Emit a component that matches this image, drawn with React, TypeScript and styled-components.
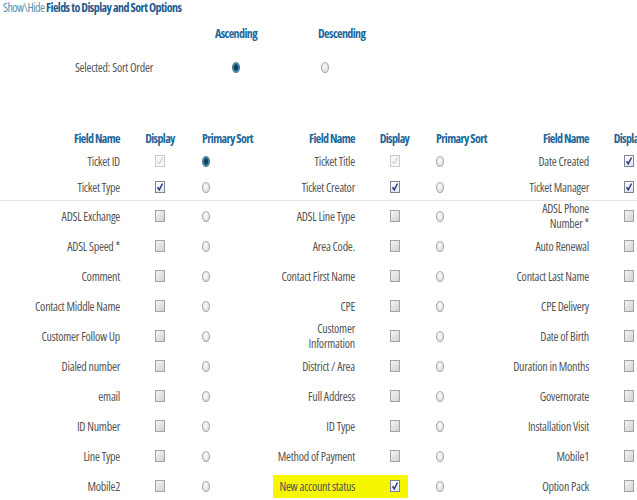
import React from "react";
import styled, { createGlobalStyle } from "styled-components";

const Global = createGlobalStyle`
  html, body { margin: 0; padding: 0; background: #fff; overflow: hidden; }
  body {
    font-family: "Open Sans", "Liberation Sans", Arial, sans-serif;
    font-stretch: 75%;
  }
`;

const Page = styled.div`
  width: 637px;
  height: 500px;
  overflow: hidden;
  color: #555;
  font-size: 12px;
`;

const Title = styled.div`
  padding: 0 3px;
  height: 15px;
  line-height: 15px;
  font-size: 12px;
  font-weight: bold;
  color: #1d5c8c;
  letter-spacing: -0.55px;
  white-space: nowrap;
`;

const TitleLight = styled.span`
  font-weight: normal;
  color: #4f95ad;
`;

const SortBlock = styled.div`
  display: grid;
  grid-template-columns: 160px 152px 120px;
  grid-template-rows: 36px 32px;
  align-items: center;
`;

const HeadText = styled.div<{ $left?: boolean }>`
  font-weight: bold;
  color: #22679a;
  text-align: ${(p) => (p.$left ? "left" : "center")};
  padding-left: ${(p) => (p.$left ? 6 : 0)}px;
  letter-spacing: -0.6px;
  white-space: nowrap;
`;

const HeadName = styled(HeadText)`
  text-align: right;
  padding-right: 4px;
`;

const LabelCell = styled.div`
  text-align: right;
  padding-right: 7px;
  letter-spacing: -0.25px;
  white-space: nowrap;
`;

const RadioCell = styled.div<{ $left?: boolean }>`
  display: flex;
  justify-content: ${(p) => (p.$left ? "flex-start" : "center")};
  padding-left: ${(p) => (p.$left ? 9 : 0)}px;
`;

const Table = styled.div`
  margin-top: 45px;
  display: grid;
  grid-template-columns: 124px 72px 74px 89px 71px 74px 89px 71px 74px;
  grid-template-rows: 20px;
  align-items: center;
  width: 664px;
`;

const Cell = styled.div<{ $h: number }>`
  height: ${(p) => p.$h}px;
  display: flex;
  align-items: center;
`;

const MARK = "#f6f600";

const NameCell = styled(Cell)<{ $marked?: boolean }>`
  justify-content: flex-end;
  text-align: right;
  padding: 0 4px;
  letter-spacing: -0.25px;
  line-height: 15px;
  white-space: pre;
  background: ${(p) =>
    p.$marked
      ? `linear-gradient(#fff 0 4px, transparent 4px calc(100% - 3px), #fff calc(100% - 3px)),
         linear-gradient(to right, #fff 0 3px, ${MARK} 3px)`
      : "transparent"};
`;

const DisplayCell = styled(Cell)<{ $marked?: boolean }>`
  justify-content: center;
  background: ${(p) =>
    p.$marked
      ? `linear-gradient(#fff 0 4px, transparent 4px calc(100% - 3px), #fff calc(100% - 3px)),
         linear-gradient(to right, ${MARK} 0 49px, #fff 49px)`
      : "transparent"};
`;

const SortCell = styled(Cell)`
  justify-content: flex-start;
  padding-left: 6px;
`;

const Separator = styled.div`
  grid-column: 1 / -1;
  height: 1px;
  background: #e4e4e4;
`;

const Box = styled.span<{ $checked?: boolean; $disabled?: boolean }>`
  width: 10px;
  height: 12px;
  box-sizing: border-box;
  border: 1px solid
    ${(p) => (p.$disabled ? "#cacaca" : p.$checked ? "#7e8494" : "#a4a4a4")};
  background: ${(p) =>
    p.$checked
      ? p.$disabled
        ? "#f7f7f7"
        : "linear-gradient(#ffffff, #e2e5ee)"
      : "linear-gradient(135deg, #f4f4f4, #d2d2d2)"};
  display: inline-flex;
  align-items: center;
  justify-content: center;
  svg {
    display: block;
  }
`;

const Radio = styled.span<{ $checked?: boolean }>`
  width: 8px;
  height: 11px;
  box-sizing: border-box;
  border-radius: 50%;
  border: 1px solid ${(p) => (p.$checked ? "#5d7486" : "#a8a8a8")};
  background: ${(p) =>
    p.$checked
      ? "radial-gradient(ellipse at 50% 50%, #0b3f62 0 35%, #2b7fa8 60%, #a8c8d8 100%)"
      : "radial-gradient(ellipse at 45% 40%, #f6f6f6 0 25%, #d0d0d0 90%)"};
  display: inline-block;
`;

function Check({ checked, disabled }: { checked?: boolean; disabled?: boolean }) {
  return (
    <Box $checked={checked} $disabled={disabled}>
      {checked && (
        <svg width="8" height="10" viewBox="0 0 8 10">
          <path
            d="M1.5 5.2 L3.3 7.8 L6.5 1.5"
            fill="none"
            stroke={disabled ? "#c4c4c4" : "#2a3a8c"}
            strokeWidth={disabled ? 1 : 1.5}
          />
        </svg>
      )}
    </Box>
  );
}

type Field = {
  name: string;
  checked?: boolean;
  disabled?: boolean;
  sorted?: boolean;
  marked?: boolean;
};

const f = (name: string, o: Partial<Field> = {}): Field => ({ name, ...o });

const topRows: Field[][] = [
  [
    f("Ticket ID", { checked: true, disabled: true, sorted: true }),
    f("Ticket Title", { checked: true, disabled: true }),
    f("Date Created", { checked: true }),
  ],
  [f("Ticket Type", { checked: true }), f("Ticket Creator", { checked: true }), f("Ticket Manager", { checked: true })],
];

const rows: Field[][] = [
  [f("ADSL Exchange"), f("ADSL Line Type"), f("ADSL Phone\nNumber *")],
  [f("ADSL Speed *"), f("Area Code."), f("Auto Renewal")],
  [f("Comment"), f("Contact First Name"), f("Contact Last Name")],
  [f("Contact Middle Name"), f("CPE"), f("CPE Delivery")],
  [f("Customer Follow Up"), f("Customer\nInformation"), f("Date of Birth")],
  [f("Dialed number"), f("District / Area"), f("Duration in Months")],
  [f("email"), f("Full Address"), f("Governorate")],
  [f("ID Number"), f("ID Type"), f("Installation Visit")],
  [f("Line Type"), f("Method of Payment"), f("Mobile1")],
  [f("Mobile2"), f("New account status", { checked: true, marked: true }), f("Option Pack")],
];

function Row({ fields, h }: { fields: Field[]; h: number }) {
  return (
    <>
      {fields.map((fd, i) => (
        <React.Fragment key={i}>
          <NameCell $h={h} $marked={fd.marked}>
            {fd.name}
          </NameCell>
          <DisplayCell $h={h} $marked={fd.marked}>
            <Check checked={fd.checked} disabled={fd.disabled} />
          </DisplayCell>
          <SortCell $h={h}>
            <Radio $checked={fd.sorted} />
          </SortCell>
        </React.Fragment>
      ))}
    </>
  );
}

export default function App() {
  return (
    <Page>
      <Global />
      <Title>
        <TitleLight>Show\Hide</TitleLight> Fields to Display and Sort Options
      </Title>
      <SortBlock>
        <div />
        <HeadText>Ascending</HeadText>
        <HeadText $left>Descending</HeadText>
        <LabelCell>Selected: Sort Order</LabelCell>
        <RadioCell>
          <Radio $checked />
        </RadioCell>
        <RadioCell $left>
          <Radio />
        </RadioCell>
      </SortBlock>
      <Table>
        {[0, 1, 2].map((g) => (
          <React.Fragment key={g}>
            <HeadName>Field Name</HeadName>
            <HeadText>Display</HeadText>
            <HeadText $left>Primary Sort</HeadText>
          </React.Fragment>
        ))}
        {topRows.map((r, i) => (
          <Row key={"t" + i} fields={r} h={26} />
        ))}
        <Separator />
        {rows.map((r, i) => (
          <Row key={"r" + i} fields={r} h={30} />
        ))}
      </Table>
    </Page>
  );
}
